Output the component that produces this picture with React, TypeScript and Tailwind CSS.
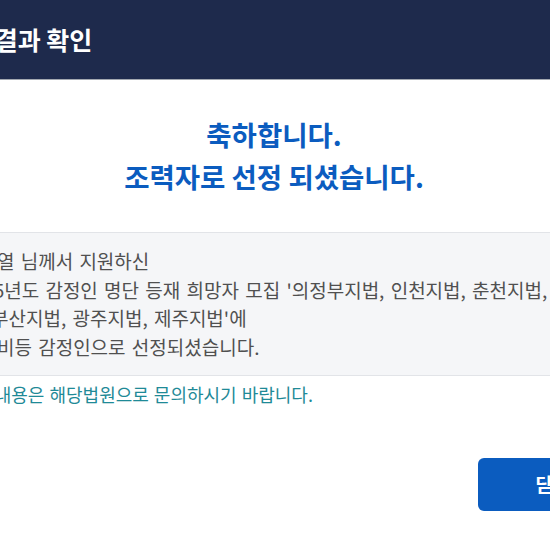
export default function App() {
  return (
    <div
      className="w-[550px] h-[550px] overflow-hidden bg-white"
      style={{ fontFamily: '"Noto Sans CJK KR", "Noto Sans", sans-serif' }}
    >
      <div className="ml-[-120px] w-[788px] bg-white">
        {/* Header */}
        <div className="h-[80px] flex items-center pl-[63px] bg-[#1e2a4c] border-b border-[#a3a8b0]">
          <h1 className="text-[25px] font-bold text-white whitespace-nowrap">선정 결과 확인</h1>
        </div>

        {/* Body */}
        <div className="px-[40px]">
          <div className="mt-[33px] text-center text-[27.5px] leading-[42px] font-bold text-[#0b5cbf]">
            <p>축하합니다.</p>
            <p>조력자로 선정 되셨습니다.</p>
          </div>

          <div className="mt-[35px] border-y border-[#e2e4e8] bg-[#f5f6f8] pl-[42px] pr-[46px] py-[14px] text-[19px] leading-[28.5px] [word-spacing:2px] text-[#505050] whitespace-nowrap">
            <p>김민열 님께서 지원하신</p>
            <p>2025년도 감정인 명단 등재 희망자 모집 '의정부지법, 인천지법, 춘천지법, 대구지법, 울산지</p>
            <p>법, 부산지법, 광주지법, 제주지법'에</p>
            <p>공사비등 감정인으로 선정되셨습니다.</p>
          </div>

          <p className="mt-[6px] ml-[-3px] text-[18px] leading-[24px] [word-spacing:1px] text-[#1f8a97] whitespace-nowrap">
            ※ 자세한 내용은 해당법원으로 문의하시기 바랍니다.
          </p>

          <div className="mt-[52px] flex justify-end">
            <button className="h-[53px] w-[150px] rounded-[6px] bg-[#0b5cbf] text-[19px] font-bold text-white">
              닫기
            </button>
          </div>
        </div>
      </div>
    </div>
  );
}
